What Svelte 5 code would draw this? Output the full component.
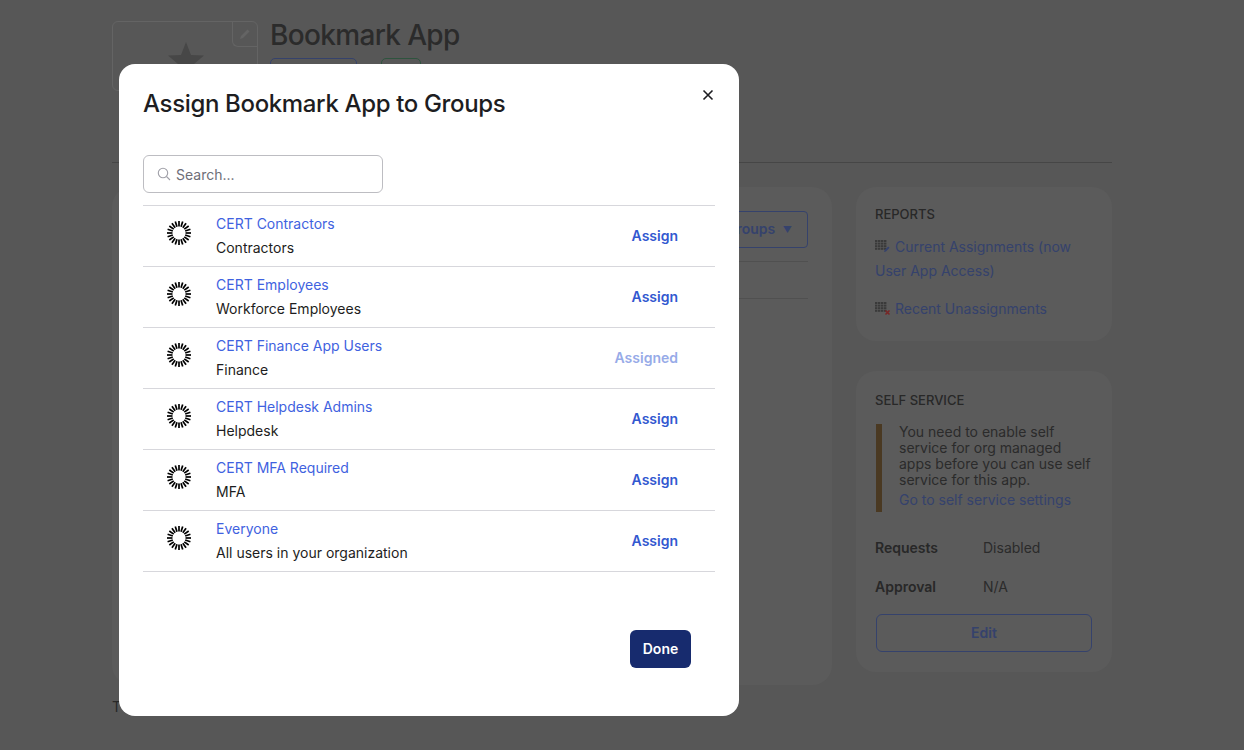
<script lang="ts">
  const groups = [
    { name: 'CERT Contractors', description: 'Contractors', assigned: false },
    { name: 'CERT Employees', description: 'Workforce Employees', assigned: false },
    { name: 'CERT Finance App Users', description: 'Finance', assigned: true },
    { name: 'CERT Helpdesk Admins', description: 'Helpdesk', assigned: false },
    { name: 'CERT MFA Required', description: 'MFA', assigned: false },
    { name: 'Everyone', description: 'All users in your organization', assigned: false },
  ];

  // sunburst group icon: evenly spaced radial ticks
  const ticks = Array.from({ length: 20 }, (_, i) => i * 18);
  const gridCells = [0, 1, 2, 3].flatMap((r) => [0, 1, 2, 3].map((c) => [c * 3, r * 2.6]));
</script>

{#snippet gridIcon()}
  {#each gridCells as [x, y]}
    <rect {x} {y} width="2.4" height="2" fill="#747474" />
  {/each}
{/snippet}

<div class="page">
  <header class="app-header">
    <div class="logo-box">
      <svg class="star" width="36" height="36" viewBox="0 0 36 36">
        <polygon points="18,0 23,13 36,13.5 26,22 29.5,35 18,27.5 6.5,35 10,22 0,13.5 13,13" fill="#8e8e8e" />
      </svg>
      <span class="edit-logo">
        <svg width="14" height="14" viewBox="0 0 14 14">
          <path d="M2 12l1-3 6.500-6.500 2 2L5 11z" fill="#c8c8c8" />
        </svg>
      </span>
    </div>
    <div class="app-title">
      <h1>Bookmark App</h1>
      <div class="badges">
        <span class="badge blue"></span>
        <span class="badge green"></span>
      </div>
    </div>
  </header>

  <div class="columns">
    <section class="card main-card">
      <div class="toolbar">
        <button class="outline-btn">Assign to Groups <span class="caret">▼</span></button>
      </div>
      <div class="table-head"></div>
    </section>

    <aside class="sidebar">
      <section class="card reports">
        <h3>REPORTS</h3>
        <p class="report-link first">
          <svg class="report-icon" width="16" height="14" viewBox="0 0 16 14">
            {@render gridIcon()}
            <path d="M9 12l.6-2 3.600-3.600 1.400 1.400L11 11.400z" fill="#6a84d8" />
          </svg>
          Current Assignments (now User App Access)
        </p>
        <p class="report-link">
          <svg class="report-icon" width="16" height="14" viewBox="0 0 16 14">
            {@render gridIcon()}
            <path d="M10.500 8.500l4 4m0-4l-4 4" stroke="#f04c4c" stroke-width="1.600" />
          </svg>
          Recent Unassignments
        </p>
      </section>

      <section class="card self-service">
        <h3>SELF SERVICE</h3>
        <div class="notice">
          <p>You need to enable self service for org managed apps before you can use self service for this app.</p>
          <span class="notice-link">Go to self service settings</span>
        </div>
        <dl>
          <dt>Requests</dt>
          <dd>Disabled</dd>
          <dt>Approval</dt>
          <dd>N/A</dd>
        </dl>
        <button class="outline-btn edit-btn">Edit</button>
      </section>
    </aside>
  </div>

  <p class="page-foot">T</p>
</div>

<div class="overlay">
  <div class="modal" role="dialog" aria-modal="true">
    <header class="modal-head">
      <h2>Assign Bookmark App to Groups</h2>
      <button class="close" aria-label="Close">
        <svg width="12" height="12" viewBox="0 0 12 12">
          <path d="M1.500 1.500l9 9M10.500 1.500l-9 9" stroke="#1d1d21" stroke-width="1.600" />
        </svg>
      </button>
    </header>

    <label class="search">
      <svg width="14" height="14" viewBox="0 0 14 14" fill="none" stroke="#a0a0a8" stroke-width="1.100">
        <circle cx="6" cy="6" r="4.700" />
        <path d="M9.500 9.500L13 13" />
      </svg>
      <input type="text" placeholder="Search..." />
    </label>

    <ul class="group-list">
      {#each groups as group (group.name)}
        <li class="group-row">
          <svg class="sunburst" width="26" height="26" viewBox="0 0 26 26">
            {#each ticks as angle}
              <line x1="13" y1="1" x2="13" y2="6.5" stroke="#000" stroke-width="1.700" transform="rotate({angle} 13 13)" />
            {/each}
          </svg>
          <div class="group-text">
            <span class="group-name">{group.name}</span>
            <span class="group-desc">{group.description}</span>
          </div>
          <button class="assign" class:assigned={group.assigned}>
            {group.assigned ? 'Assigned' : 'Assign'}
          </button>
        </li>
      {/each}
    </ul>

    <footer class="modal-foot">
      <button class="done">Done</button>
    </footer>
  </div>
</div>

<style>
  :global(body) {
    background: #aeaeae;
    font-family: Inter, 'Noto Sans', sans-serif;
    overflow: hidden;
  }

  .page {
    width: 1000px;
    margin-left: 112px;
    padding-top: 21px;
    color: #565656;
    font-size: 14px;
  }

  .app-header {
    display: flex;
    gap: 12px;
    height: 141px;
    border-bottom: 1px solid #8c8c8c;
  }

  .logo-box {
    position: relative;
    width: 144px;
    height: 48px;
    border: 1px solid #c8c8c8;
    border-radius: 6px;
    display: flex;
    justify-content: center;
    padding-top: 20px;
  }

  .star {
    margin-left: 1px;
  }

  .edit-logo {
    position: absolute;
    top: 0;
    right: 0;
    width: 24px;
    height: 24px;
    border-left: 1px solid #c8c8c8;
    border-bottom: 1px solid #c8c8c8;
    border-radius: 0 6px 0 6px;
    display: flex;
    align-items: center;
    justify-content: center;
  }

  .app-title h1 {
    margin: 0;
    font-size: 28px;
    font-weight: 500;
    line-height: 28px;
    letter-spacing: -0.65px;
  }

  .badges {
    display: flex;
    gap: 24px;
    margin-top: 9px;
  }

  .badge {
    display: block;
    height: 24px;
    border-radius: 5px;
  }

  .badge.blue {
    width: 85px;
    border: 1px solid #6a84d8;
  }

  .badge.green {
    width: 38px;
    border: 1px solid #5ca87c;
  }

  .columns {
    display: grid;
    grid-template-columns: 720px 256px;
    gap: 24px;
    margin-top: 24px;
  }

  .card {
    background: #b6b6b6;
    border-radius: 20px;
    box-sizing: border-box;
  }

  .main-card {
    height: 498px;
    padding: 24px;
  }

  .toolbar {
    display: flex;
    justify-content: flex-end;
    padding-bottom: 13px;
    border-bottom: 1px solid #a0a0a0;
  }

  .table-head {
    height: 36px;
    border-bottom: 1px solid #a0a0a0;
  }

  .outline-btn {
    font: inherit;
    font-weight: 600;
    color: #6a84d8;
    background: transparent;
    border: 1px solid #6a84d8;
    border-radius: 4px;
    height: 37px;
    padding: 0 15px 2px;
  }

  .caret {
    font-size: 9px;
    margin-left: 4px;
    vertical-align: 1px;
  }

  .sidebar {
    display: flex;
    flex-direction: column;
    gap: 30px;
  }

  .sidebar h3 {
    margin: 0;
    font-size: 13px;
    font-weight: 500;
    line-height: 16px;
    color: #505050;
  }

  .reports {
    height: 154px;
    padding: 19px 19px 0;
  }

  .report-link {
    margin: 0;
    color: #6a84d8;
    line-height: 24px;
  }

  .report-link.first {
    margin: 13px 0 14px;
  }

  .report-icon {
    vertical-align: -2px;
  }

  .self-service {
    height: 301px;
    padding: 21px 20px 0 19px;
  }

  .notice {
    margin: 16px 0 0 1px;
    border-left: 6px solid #947244;
    padding-left: 17px;
    height: 88px;
    box-sizing: border-box;
    line-height: 16px;
  }

  .notice p {
    margin: 0;
  }

  .notice-link {
    display: block;
    margin-top: 4px;
    color: #6a84d8;
  }

  dl {
    display: grid;
    grid-template-columns: 108px 1fr;
    row-gap: 19px;
    margin: 26px 0 0;
    line-height: 20px;
  }

  dt {
    font-weight: 600;
    color: #505050;
  }

  dd {
    margin: 0;
  }

  .edit-btn {
    display: block;
    width: 216px;
    height: 38px;
    margin: 17px 0 0 1px;
    border-radius: 6px;
    padding: 0 0 1px;
  }

  .page-foot {
    margin: 14px 0 0;
    line-height: 16px;
    color: #505050;
  }

  .overlay {
    position: fixed;
    inset: 0;
    background: rgba(0, 0, 0, 0.5);
    padding: 64px 0 0 119px;
  }

  .modal {
    width: 620px;
    height: 652px;
    background: #fff;
    border-radius: 16px;
    padding: 24px;
    box-sizing: border-box;
    color: #1d1d21;
    display: flex;
    flex-direction: column;
  }

  .modal-head {
    position: relative;
    height: 67px;
  }

  .modal-head h2 {
    margin: 0;
    font-size: 24px;
    font-weight: 500;
    line-height: 32px;
    letter-spacing: -0.35px;
  }

  .close {
    position: absolute;
    top: -3px;
    right: -3px;
    width: 20px;
    height: 20px;
    padding: 0;
    border: none;
    background: none;
    display: flex;
    align-items: center;
    justify-content: center;
  }

  .search {
    width: 240px;
    height: 38px;
    box-sizing: border-box;
    border: 1px solid #bdbdc2;
    border-radius: 6px;
    display: flex;
    align-items: center;
    gap: 5px;
    padding-left: 13px;
  }

  .search input {
    flex: 1;
    min-width: 0;
    border: none;
    outline: none;
    font: inherit;
    font-size: 14px;
    padding: 0;
  }

  .search input::placeholder {
    color: #6e6e78;
    opacity: 1;
  }

  .group-list {
    list-style: none;
    margin: 12px 0 0;
    padding: 0;
    width: 572px;
    border-top: 1px solid #d7d7dc;
  }

  .group-row {
    display: flex;
    align-items: center;
    height: 61px;
    box-sizing: border-box;
    border-bottom: 1px solid #d7d7dc;
    padding: 0 37px 0 23px;
  }

  .sunburst {
    margin-top: -6px;
    flex-shrink: 0;
  }

  .group-text {
    flex: 1;
    display: flex;
    flex-direction: column;
    margin-left: 24px;
    font-size: 14px;
    line-height: 24px;
  }

  .group-name {
    color: #3f62e0;
  }

  .assign {
    font: inherit;
    font-size: 14px;
    font-weight: 600;
    color: #3258d0;
    background: none;
    border: none;
    padding: 0 0 2px;
  }

  .assign.assigned {
    color: #97abe8;
  }

  .modal-foot {
    display: flex;
    justify-content: flex-end;
    padding-right: 24px;
    margin-top: 58px;
  }

  .done {
    font: inherit;
    font-size: 14px;
    font-weight: 600;
    color: #fff;
    background: #172b6e;
    border: none;
    border-radius: 6px;
    width: 61px;
    height: 38px;
    padding: 0 0 2px;
  }
</style>
